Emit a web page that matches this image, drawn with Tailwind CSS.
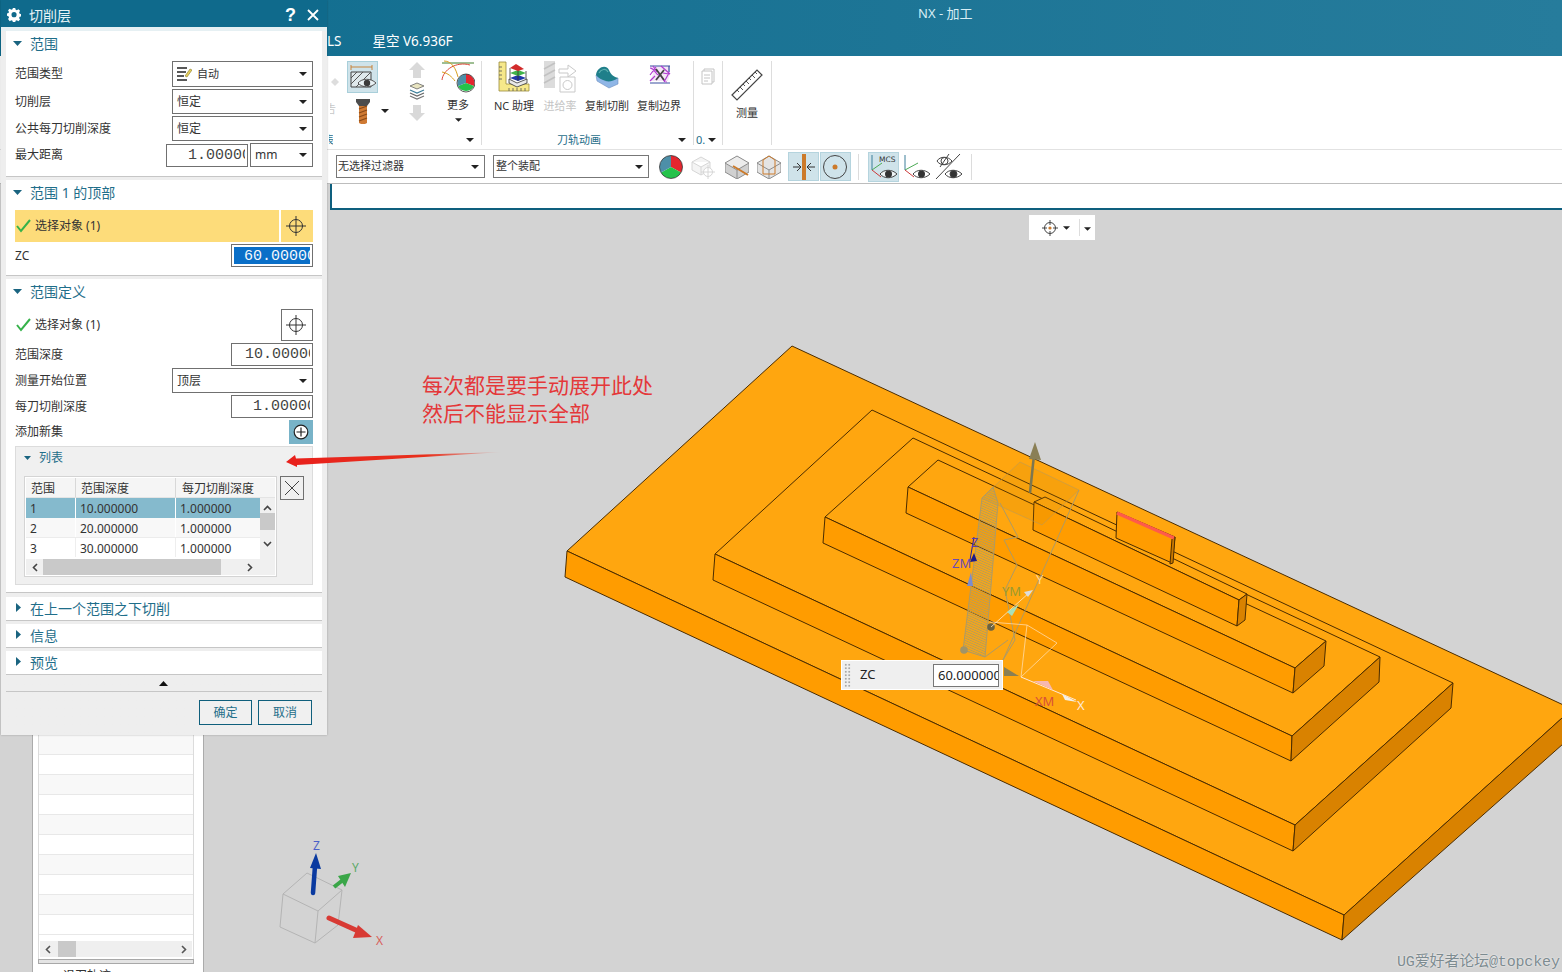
<!DOCTYPE html>
<html lang="zh">
<head>
<meta charset="utf-8">
<title>NX - 加工</title>
<script src="https://cdn.jsdelivr.net/npm/@tailwindcss/browser@4"></script>
</head>
<body class="m-0 overflow-hidden">
<div class="relative w-[1562px] h-[972px] overflow-hidden flex flex-col bg-[#d3d3d3] text-[#333] text-[11px] font-['Noto_Sans','Noto_Sans_CJK_SC',sans-serif]">

  <!-- window title + tabs -->
  <header class="h-[56px] shrink-0 bg-gradient-to-r from-[#0e6c8e] to-[#267c9c] text-white flex flex-col">
    <div class="h-[26px] pl-[918px] pt-[4px] text-[13px] leading-[18px] text-[#d8eef5]">NX - 加工</div>
    <nav class="h-[30px] flex items-center text-[13.500px]">
      <span class="ml-[327px]">LS</span>
      <span class="ml-[31px]">星空 V6.936F</span>
    </nav>
  </header>

  <!-- ribbon -->
  <section class="h-[93px] shrink-0 bg-white flex pl-[330px] pt-[5px]">
    <div class="w-[152px] h-[84px] border-r border-[#dddddd] flex flex-col justify-between">
      <div class="flex items-start">
        <div class="w-[17px] flex flex-col text-[#c8c8c8] overflow-hidden">
          <svg class="mt-[16px] w-[10px] h-[10px]" viewBox="0 0 10 10"><path d="M5 1l4 4-4 4-4-4z" fill="#ddd"/></svg>
          <span class="mt-[15px] text-[11px] leading-[14px] -ml-[5px] w-[12px] overflow-hidden">告</span>
        </div>
        <div class="w-[31px] flex flex-col items-center">
          <div class="w-[31px] h-[32px] bg-[#cfe3ea] border border-[#a9cfda] flex items-center justify-center">
            <svg class="w-[29px] h-[28px]" viewBox="0 0 29 28" fill="none">
              <path d="M3 2v5M24 2v5M3 4h21" stroke="#c77b2a" stroke-width=".9"/>
              <path d="M3 9h20v15H3z" fill="#dfe9ec" stroke="#444" stroke-width="1"/>
              <path d="M3 15l6-6M3 21l12-12M8 24L23 9M15 24l8-8" stroke="#555" stroke-width="1"/>
              <path d="M10 20c4-5 13-5 18 0-5 5-14 5-18 0z" fill="#e9f2f5" stroke="#555" stroke-width="1"/>
              <circle cx="19" cy="20" r="3.200" fill="#3b3b3b"/>
            </svg>
          </div>
          <svg class="mt-[6px] w-[14px] h-[25px]" viewBox="0 0 14 25">
            <path d="M0 0h14v3l-3 4H3L0 3z" fill="#4c4c4c"/>
            <path d="M3 7h8v17l-2 1H5l-2-1z" fill="#cf7a33"/>
            <path d="M3 10l8-3M3 14l8-3M3 18l8-3M3 22l8-3" stroke="#8a4a18" stroke-width="1.300"/>
          </svg>
        </div>
        <svg class="ml-[3px] mt-[48px] w-[8px] h-[4px]" viewBox="0 0 8 4"><path d="M0 0h8L4 4z" fill="#222"/></svg>
        <div class="ml-[16px] w-[24px] flex flex-col items-center">
          <svg class="w-[18px] h-[18px]" viewBox="0 0 18 18"><path d="M9 1l8 8h-4v8H5V9H1z" fill="#d9d9d9"/></svg>
          <svg class="mt-[3px] w-[18px] h-[18px]" viewBox="0 0 18 18" fill="none"><path d="M9 1l7 3-7 3-7-3z" fill="#e8e4c0" stroke="#666" stroke-width=".8"/><path d="M2 8l7 3 7-3" stroke="#3c7f9a" stroke-width="1.200"/><path d="M2 11l7 3 7-3" stroke="#666" stroke-width="1.200"/><path d="M2 14l7 3 7-3" stroke="#777" stroke-width="1.200"/></svg>
          <svg class="mt-[4px] w-[18px] h-[18px]" viewBox="0 0 18 18"><path d="M5 1h8v8h4l-8 8-8-8h4z" fill="#d9d9d9"/></svg>
        </div>
        <div class="ml-[10px] w-[38px] flex flex-col items-center">
          <svg class="-mt-[1px] w-[34px] h-[34px]" viewBox="0 0 34 34" fill="none">
            <path d="M1 3h32" stroke="#3f7f28" stroke-width="1"/>
            <path d="M1 20c1-10 14-19 28-15" stroke="#dd4a3a" stroke-width="1"/>
            <path d="M3 1c8 0 12 8 14 16" stroke="#d9a020" stroke-width="1"/>
            <path d="M1 12c6 1 10 5 13 9" stroke="#d9a020" stroke-width="1"/>
            <path d="M25 14v9l8 3a9 9 0 0 0-8-12z" fill="#e4262f"/>
            <path d="M25 23l8 3a9 9 0 0 1-16 0z" fill="#24c24a"/>
            <path d="M25 23l-8 3a9 9 0 0 1 8-12z" fill="#4d8fa8"/>
            <circle cx="25" cy="23" r="9" stroke="#333" stroke-width=".8"/>
          </svg>
          <span class="mt-[4px] leading-[14px]">更多</span>
          <svg class="mt-[6px] w-[7px] h-[4px]" viewBox="0 0 8 4"><path d="M0 0h8L4 4z" fill="#222"/></svg>
        </div>
      </div>
      <div class="h-[10px] flex items-center justify-between pr-[7px] text-[#1f6e8a]">
        <span class="w-[4px] overflow-hidden -ml-[1px]"><span class="-ml-[6px] block w-[12px]">表</span></span>
        <svg class="w-[8px] h-[4px]" viewBox="0 0 8 4"><path d="M0 0h8L4 4z" fill="#222"/></svg>
      </div>
    </div>

    <div class="w-[212px] h-[84px] border-r border-[#dddddd] flex flex-col justify-between">
      <div class="flex items-start pl-[10px]">
        <div class="w-[44px] flex flex-col items-center">
          <svg class="w-[32px] h-[32px]" viewBox="0 0 32 32" fill="none">
            <path d="M1 1h7v22h23v7H1z" fill="#f6e88a" stroke="#9a8a3a" stroke-width=".8"/>
            <path d="M1 6h3M1 10h3M1 14h3M1 18h3M11 30v-3M15 30v-3M19 30v-3M23 30v-3M27 30v-3" stroke="#555" stroke-width=".8"/>
            <path d="M11 18l8 4 10-4v4l-10 4-8-4z" fill="#e8e8e8" stroke="#333" stroke-width=".8"/>
            <path d="M12 17l8 3 8-3-8-3z" fill="#2038a8"/>
            <path d="M12 12l8 3 8-3-8-3z" fill="#3fb34a"/>
            <path d="M12 7l8 3 6-2-8-5z" fill="#d22b2b"/>
            <path d="M12 7v11M20 10v10M28 10v8" stroke="#333" stroke-width=".8"/>
          </svg>
          <span class="mt-[5px] leading-[16px] text-[11px] whitespace-nowrap">NC 助理</span>
        </div>
        <div class="ml-[2px] w-[44px] flex flex-col items-center">
          <svg class="w-[34px] h-[32px]" viewBox="0 0 34 32" fill="none">
            <path d="M1 0h11v27H1z" fill="#dcdcdc"/>
            <path d="M1 8l11-6M1 15l11-6M1 22l11-6" stroke="#c2c2c2" stroke-width="1.600"/>
            <path d="M16 8h9V4l8 6-8 6v-4h-9z" fill="#fff" stroke="#c9c9c9"/>
            <path d="M17 16h15v15H17z" fill="#fff" stroke="#c9c9c9"/>
            <circle cx="24.500" cy="24" r="4.500" stroke="#c9c9c9"/>
          </svg>
          <span class="mt-[5px] leading-[16px] text-[#c4c4c4] whitespace-nowrap">进给率</span>
        </div>
        <div class="ml-[3px] w-[44px] flex flex-col items-center">
          <svg class="w-[26px] h-[32px]" viewBox="0 0 26 32" fill="none">
            <path d="M2 14l1 6 12 7 9-4v-6L12 20z" fill="#8fb6e6" stroke="#6f8fc0" stroke-width=".6"/>
            <path d="M2 14C3 6 12 3 15 9c2 5 5 7 9 8-4 3-9 4-12 3-4-1-8-3-10-6z" fill="#1f7f8a"/>
            <path d="M5 12c2-4 7-5 9-1" stroke="#5db0b0" stroke-width="1.200"/>
          </svg>
          <span class="mt-[5px] leading-[16px] whitespace-nowrap">复制切削</span>
        </div>
        <div class="ml-[8px] w-[44px] flex flex-col items-center">
          <svg class="w-[24px] h-[32px]" viewBox="0 0 24 32" fill="none">
            <path d="M3 5h20v8l-2 7H3l3-7z" fill="#f3e6f6"/>
            <path d="M3 5h20M22 5v6M3 22h20" stroke="#3a4ea0" stroke-width="1.200"/>
            <path d="M3 7c5 0 5 7 9 7s3 7 8 7M3 14l6-8M14 5l9 8M17 21l5-9M3 20l5-5M6 5l4 6M16 12l6 1" stroke="#b03ad0" stroke-width="1.200"/>
            <path d="M9 8l8 11M17 9L9 19" stroke="#444" stroke-width="1.800"/>
          </svg>
          <span class="mt-[5px] leading-[16px] whitespace-nowrap">复制边界</span>
        </div>
      </div>
      <div class="h-[10px] flex items-center text-[#1f6e8a]">
        <span class="ml-[75px] w-[46px] whitespace-nowrap">刀轨动画</span>
        <svg class="ml-[75px] w-[8px] h-[4px]" viewBox="0 0 8 4"><path d="M0 0h8L4 4z" fill="#222"/></svg>
      </div>
    </div>

    <div class="w-[29px] h-[84px] border-r border-[#dddddd] flex flex-col justify-between">
      <div class="flex justify-center pt-[7px]">
        <svg class="w-[14px] h-[17px]" viewBox="0 0 14 17" fill="none" stroke="#c4c4c4"><path d="M3 3V1h10v13h-2"/><path d="M1 3h10v13H1z" fill="#fff"/><path d="M3 7h6M3 10h6M3 13h4"/></svg>
      </div>
      <div class="h-[10px] flex items-center justify-between pl-[2px] pr-[6px] text-[#1f6e8a]">
        <span>0.</span>
        <svg class="w-[8px] h-[4px]" viewBox="0 0 8 4"><path d="M0 0h8L4 4z" fill="#222"/></svg>
      </div>
    </div>

    <div class="w-[49px] h-[84px] border-r border-[#dddddd] flex flex-col items-center">
      <svg class="mt-[8px] w-[32px] h-[33px]" viewBox="0 0 32 33" fill="none">
        <path d="M1 26L26 1l5 5L6 31z" fill="#fff" stroke="#444" stroke-width="1.200"/>
        <path d="M6 21l2 2M9 18l3 3M12 15l2 2M15 12l3 3M18 9l2 2M21 6l3 3M24 3l2 2" stroke="#444" stroke-width=".9"/>
      </svg>
      <span class="mt-[3px] leading-[16px]">测量</span>
    </div>
  </section>

  <!-- selection bar -->
  <section class="h-[35px] shrink-0 bg-white border-y border-[#bdbdbd] border-t-[#e2e2e2] flex items-center pl-[336px]">
    <div class="w-[149px] h-[23px] border border-[#777] flex items-center justify-between pl-[1px] pr-[5px]">
      <span class="text-[11px]">无选择过滤器</span>
      <svg class="w-[8px] h-[4px]" viewBox="0 0 8 4"><path d="M0 0h8L4 4z" fill="#222"/></svg>
    </div>
    <div class="ml-[8px] w-[156px] h-[23px] border border-[#777] flex items-center justify-between pl-[2px] pr-[5px]">
      <span class="text-[11px]">整个装配</span>
      <svg class="w-[8px] h-[4px]" viewBox="0 0 8 4"><path d="M0 0h8L4 4z" fill="#222"/></svg>
    </div>
    <svg class="ml-[10px] w-[24px] h-[24px]" viewBox="0 0 24 24"><path d="M12 12V.5a11.500 11.500 0 0 1 10 17z" fill="#e4262f"/><path d="M12 12l10 5.500a11.500 11.500 0 0 1-20 0z" fill="#24c24a"/><path d="M12 12L2 17.500A11.500 11.500 0 0 1 12 .5z" fill="#4d8fa8"/><circle cx="12" cy="12" r="11.500" fill="none" stroke="#333" stroke-width=".8"/></svg>
    <svg class="ml-[8px] w-[24px] h-[24px]" viewBox="0 0 24 24" fill="none" stroke="#d6d6d6"><path d="M1 7l9-5 9 5v8l-9 5-9-5zM1 7l9 5 9-5M10 12v8" fill="#f4f4f4"/><circle cx="17" cy="17" r="4.500" fill="#fff"/><path d="M17 10v14M10 17h14"/></svg>
    <svg class="ml-[10px] w-[24px] h-[24px]" viewBox="0 0 24 24" fill="none"><path d="M0 8l12-7 12 7v9l-12 7-12-7z" fill="#d0d0d0"/><path d="M0 8l12 7 12-7-12-7z" fill="#ececec"/><path d="M0 8l12-7 12 7v9l-12 7-12-7zM0 8l12 7 12-7M12 15v9" stroke="#8c8c8c"/><path d="M8 11l15 9" stroke="#cc7a2a" stroke-width="2"/></svg>
    <svg class="ml-[8px] w-[24px] h-[24px]" viewBox="0 0 24 24" fill="none"><path d="M0 8l12-7 12 7v9l-12 7-12-7z" fill="#e4e4e4"/><path d="M0 8l12-7 12 7v9l-12 7-12-7zM0 8l12 7 12-7M12 15v9" stroke="#8c8c8c"/><path d="M6 5v14l12 0V5M6 5l6-4 6 4" stroke="#cc7a2a" stroke-width="1"/></svg>
    <div class="ml-[7px] w-[31px] h-[29px] bg-[#cfe3ea] border border-[#b5d4de] flex items-center justify-center">
      <svg class="w-[26px] h-[26px]" viewBox="0 0 26 26" fill="none"><path d="M11 0h4v26h-4z" fill="#cc7a2a"/><path d="M2 13h8M6 9l4 4-4 4M24 13h-8M20 9l-4 4 4 4" stroke="#333" stroke-width="1"/></svg>
    </div>
    <div class="ml-[1px] w-[31px] h-[29px] bg-[#cfe3ea] border border-[#b5d4de] flex items-center justify-center">
      <svg class="w-[26px] h-[26px] -translate-x-[1px]" viewBox="0 0 26 26" fill="none"><circle cx="13" cy="13" r="11.500" stroke="#444" stroke-width="1"/><circle cx="13" cy="13" r="2.500" fill="#cc7a2a"/></svg>
    </div>
    <div class="ml-[7px] w-[1px] h-[26px] bg-[#dcdcdc]"></div>
    <div class="ml-[9px] w-[31px] h-[30px] bg-[#cfe3ea] border border-[#b5d4de] flex items-center justify-center">
      <svg class="w-[29px] h-[28px]" viewBox="0 0 29 28" fill="none"><path d="M3 2v15" stroke="#3c7f9a"/><path d="M3 17l10-7" stroke="#4caa55"/><path d="M3 17l9 7" stroke="#cc3a3a"/><text x="10" y="9" font-size="7.500" fill="#333" font-family="DejaVu Sans">MCS</text><path d="M11 21c4-5 12-5 17 0-5 5-13 5-17 0z" fill="#eef4f6" stroke="#444"/><circle cx="19.500" cy="21" r="3.500" fill="#333"/></svg>
    </div>
    <svg class="ml-[2px] w-[30px] h-[28px]" viewBox="0 0 30 28" fill="none"><path d="M4 2v15" stroke="#3c7f9a"/><path d="M4 17l13-7" stroke="#4caa55"/><path d="M4 17l9 7" stroke="#cc3a3a"/><path d="M12 21c4-5 12-5 17 0-5 5-13 5-17 0z" fill="#fff" stroke="#444"/><circle cx="20.500" cy="21" r="3.500" fill="#333"/></svg>
    <svg class="ml-[3px] w-[30px] h-[28px]" viewBox="0 0 30 28" fill="none" stroke="#444"><path d="M3 8c3-5 11-5 15 0-4 5-12 5-15 0z"/><circle cx="10.500" cy="8" r="3.500"/><path d="M6 14L15 1M2 26L26 1"/><path d="M11 21c4-5 12-5 17 0-5 5-13 5-17 0z" fill="#fff"/><circle cx="19.500" cy="21" r="3.500" fill="#333"/></svg>
    <div class="ml-[7px] w-[1px] h-[26px] bg-[#dcdcdc]"></div>
  </section>

  <!-- cue line -->
  <div class="h-[26px] shrink-0 ml-[330px] bg-white border-l-[2px] border-b-[2px] border-[#0e5f7e]"></div>

  <!-- graphics window: the left navigator column runs behind the dialog -->
  <main class="flex-1 min-h-0 flex pl-[32px] overflow-hidden">
    <div class="w-[172px] h-full bg-white border-x border-[#ababab] flex flex-col pl-[5px] pr-[9px]">
      <div class="flex-1"></div>
      <div class="border-x border-[#dcdcdc] flex flex-col">
        <div class="h-[20px] bg-[#f8f8f8] border-b border-[#e8e8e8]"></div>
        <div class="h-[20px] bg-white border-b border-[#e8e8e8]"></div>
        <div class="h-[20px] bg-[#f8f8f8] border-b border-[#e8e8e8]"></div>
        <div class="h-[20px] bg-white border-b border-[#e8e8e8]"></div>
        <div class="h-[20px] bg-[#f8f8f8] border-b border-[#e8e8e8]"></div>
        <div class="h-[20px] bg-white border-b border-[#e8e8e8]"></div>
        <div class="h-[20px] bg-[#f8f8f8] border-b border-[#e8e8e8]"></div>
        <div class="h-[20px] bg-white border-b border-[#e8e8e8]"></div>
        <div class="h-[20px] bg-[#f8f8f8] border-b border-[#e8e8e8]"></div>
        <div class="h-[20px] bg-white border-b border-[#e8e8e8]"></div>
        <div class="h-[6px] bg-white"></div>
        <div class="h-[16px] mx-[1px] bg-[#efefef] flex items-center justify-between pl-[5px] pr-[5px]">
          <div class="flex items-center h-full">
            <svg class="w-[6px] h-[9px]" viewBox="0 0 6 9" fill="none"><path d="M5 1L1.500 4.500 5 8" stroke="#555" stroke-width="1.600"/></svg>
            <div class="ml-[7px] w-[18px] h-full bg-[#c9c9c9]"></div>
          </div>
          <svg class="w-[6px] h-[9px]" viewBox="0 0 6 9" fill="none"><path d="M1 1l3.500 3.500L1 8" stroke="#555" stroke-width="1.600"/></svg>
        </div>
        <div class="h-[2px] bg-white"></div>
      </div>
      <div class="h-[5px] bg-[#e4e4e4] border border-[#a8a8a8]"></div>
      <div class="h-[8px] overflow-hidden pl-[25px] pt-[4px] text-[12px] leading-[16px]">退刀轨迹</div>
    </div>
  </main>

  <!-- 3D model, view triad: free canvas -->
  <svg class="absolute left-0 top-0 w-[1562px] h-[972px] pointer-events-none" viewBox="0 0 1562 972" fill="none">
    <defs>
      <pattern id="hatch" width="2.200" height="2.200" patternUnits="userSpaceOnUse" patternTransform="rotate(24)"><path d="M0 1.100h2.200" stroke="#b39c5c" stroke-width="1"/></pattern>
    </defs>
    <g stroke="#4a2c00" stroke-width="1" stroke-linejoin="round">
      <path d="M792 346L1572 709 1344 915 567 551z" fill="#ffa60f"/>
      <path d="M567 551L1344 915 1342 940 565 577z" fill="#ff9c00"/>
      <path d="M1344 915L1572 709V736L1342 940z" fill="#d98200"/>

      <path d="M872 410L1453 683 1295 825 715 554z" fill="#ffa60f"/>
      <path d="M715 554L1295 825 1293 851 713 580z" fill="#ff9c00"/>
      <path d="M1295 825L1453 683 1451 708 1293 851z" fill="#d98200"/>

      <path d="M913 438L1380 657 1292 736 825 517z" fill="#ffa60f"/>
      <path d="M825 517L1292 736 1291 761 823 543z" fill="#ff9c00"/>
      <path d="M1292 736L1380 657 1379 682 1291 761z" fill="#d98200"/>

      <path d="M938 460L1326 641 1295 668 908 487z" fill="#ffa60f"/>
      <path d="M908 487L1295 668 1293 693 906 513z" fill="#ff9c00"/>
      <path d="M1295 668L1326 641 1324 666 1293 693z" fill="#d98200"/>

      <path d="M1045 497L1247 594 1239 600 1034 502z" fill="#ffa60f"/>
      <path d="M1034 502L1239 600 1237 626 1033 530z" fill="#ff9c00"/>
      <path d="M1239 600L1247 594 1245 620 1237 626z" fill="#d98200"/>

      <path d="M1117 512L1175 537 1172 563 1116 538z" fill="#ff9c00"/>
      <path d="M1172 539L1175 537 1173 563 1170 564z" fill="#c87800"/>
    </g>
    <path d="M1117 513L1174 538" stroke="#ff5a4a" stroke-width="3.500"/>

    <!-- section tool gizmo -->
    <path d="M1020 462L1079 490 1042 525 982 498z" fill="#c8860a" fill-opacity=".14" stroke="#b89a5c" stroke-width=".8" stroke-opacity=".7"/>
    <path d="M1079 490L1003 660M1000 503L1018 537 1004 540 1017 565 1005 590 1015 640 1003 660M985 657L1008 640" stroke="#ad9a66" stroke-width="1"/>
    <path d="M993 487L982 498 963 650 985 657 998 503z" fill="url(#hatch)" stroke="#ad9a66" stroke-width="1"/>
    <path d="M1030 493L1034 455" stroke="#7c7650" stroke-width="2.500"/>
    <path d="M1035 442L1041 460 1029 459z" fill="#8a7f55"/>
    <circle cx="964" cy="650" r="3.800" fill="#a09468"/>
    <circle cx="991" cy="627" r="3.800" fill="#6a6242"/>
    <path d="M991 627L1030 592" stroke="#ffe8c8" stroke-width="1" stroke-opacity=".8"/>
    <path d="M1033 590L1024 592 1028 597z" fill="#ddd"/>
    <path d="M1019 604L1007 612 1012 616z" fill="#a8e0b8"/>
    <path d="M1021 677L1057 643 1027 625 1021 677M990 622L1027 625" stroke="#ffe3bd" stroke-width="1" stroke-opacity=".7"/>
    <path d="M1021 677L1076 700" stroke="#ffe8d8" stroke-width="1"/>
    <path d="M1033 681L1053 690 1048 681z" fill="#f7b8b0"/>
    <path d="M1077 702L1062 694 1065 700z" fill="#f4f0e8"/>
    <path d="M1004 667L1019 676 1004 676z" fill="#8a7f55"/>
    <path d="M974 537L970 560" stroke="#24209a" stroke-width="1"/>
    <path d="M974 553L970 562 977 561z" fill="#1a1a8c"/>
    <path d="M971 572L967 586 973 586z" fill="#7a8cd0"/>
    <g font-family="Noto Sans, sans-serif" font-size="13">
      <text x="971" y="547" fill="#5a3db0">Z</text>
      <text x="952" y="568" fill="#6a4bb8">ZM</text>
      <text x="1002" y="596" fill="#9a9a30">YM</text>
      <text x="1035" y="706" fill="#d8503a">XM</text>
      <text x="1077" y="710" fill="#ffe8d8">X</text>
      <text x="1036" y="584" fill="#ffd89a">Y</text>
    </g>

    <!-- view triad -->
    <path d="M307 873L283 894 318 911 342 890zM283 894L280 927 315 943 318 911M315 943L338 925 342 890" stroke="#b4b4b4" stroke-width="1"/>
    <path d="M313 893L315 866" stroke="#0a3aa0" stroke-width="4.500" stroke-linecap="round"/>
    <path d="M316 853L321 869 310 868z" fill="#0a3aa0"/>
    <path d="M334 887L343 880" stroke="#3aa648" stroke-width="4"/>
    <path d="M351 873L345 887 338 876z" fill="#3aa648"/>
    <path d="M329 918L358 931" stroke="#d83a34" stroke-width="5" stroke-linecap="round"/>
    <path d="M372 937L353 938 358 925z" fill="#d83a34"/>
    <g font-family="Noto Sans, sans-serif" font-size="12">
      <text x="313" y="850" fill="#4a5fc8">Z</text>
      <text x="352" y="872" fill="#5aa868">Y</text>
      <text x="376" y="945" fill="#d8605a">X</text>
    </g>
  </svg>

  <!-- annotation -->
  <p class="absolute left-[422px] top-[370px] text-[21px] leading-[28px] text-[#e4383a] font-['Noto_Sans_CJK_SC',sans-serif] whitespace-nowrap">每次都是要手动展开此处<br>然后不能显示全部</p>

  <!-- watermark -->
  <div class="absolute left-[1397px] top-[950px] text-[15px] leading-[20px] tracking-[-0.15px] text-[#7d8b90] [text-shadow:0_0_2px_#fff] font-['Liberation_Mono','Noto_Sans_CJK_SC',monospace] whitespace-nowrap translate-y-[3px]">UG爱好者论坛@topckey</div>

  <!-- orient view widget -->
  <div class="absolute left-[1029px] top-[215px] w-[66px] h-[25px] bg-white flex items-center">
    <svg class="ml-[13px] w-[16px] h-[16px]" viewBox="0 0 16 16" fill="none" stroke="#444"><circle cx="8" cy="8" r="5.500"/><path d="M8 0v5M8 11v5M0 8h5M11 8h5"/><circle cx="8" cy="8" r="1.600" fill="#cc7a2a" stroke="none"/></svg>
    <svg class="ml-[5px] w-[7px] h-[4px]" viewBox="0 0 8 4"><path d="M0 0h8L4 4z" fill="#222"/></svg>
    <div class="ml-[9px] w-[1px] h-[17px] bg-[#dddddd]"></div>
    <svg class="ml-[4px] mt-[3px] w-[7px] h-[4px]" viewBox="0 0 8 4"><path d="M0 0h8L4 4z" fill="#222"/></svg>
  </div>

  <!-- on-screen input -->
  <div class="absolute left-[841px] top-[660px] w-[162px] h-[30px] bg-[#efefef] border border-white flex items-center">
    <div class="ml-[2px] w-[7px] h-[24px] bg-[radial-gradient(circle,#a8a8a8_1.100px,transparent_1.200px)] bg-[length:3.500px_3.500px]"></div>
    <span class="ml-[9px] w-[73px] text-[13px] text-[#222]">ZC</span>
    <div class="w-[66px] h-[23px] bg-white border border-[#777] pl-[4px] overflow-hidden text-[13px] leading-[21px] text-[#222] whitespace-nowrap">60.000000</div>
  </div>

  <!-- 切削层 dialog -->
  <aside class="absolute left-[1px] top-0 w-[326px] h-[735px] bg-[#eeeeee] shadow-[0_0_2px_rgba(0,0,0,.25)] flex flex-col text-[12px] text-[#333] font-['Noto_Sans','Noto_Sans_CJK_SC',sans-serif]">
    <div class="h-[27px] shrink-0 bg-[#0f6a8c] text-white flex items-center pt-[3px] pl-[6px] pr-[8px]">
      <svg class="w-[14px] h-[14px]" viewBox="0 0 14 14"><path fill-rule="evenodd" d="M5.800 0h2.400l.4 1.900 1.300.6 1.700-1 1.700 1.700-1 1.700.6 1.300 1.900.4v2.400l-1.900.4-.6 1.300 1 1.700-1.700 1.700-1.700-1-1.300.6-.4 1.900H5.800l-.4-1.900-1.300-.6-1.700 1L.7 11.800l1-1.700-.6-1.300L-.8 8.400V6l1.900-.4.6-1.300-1-1.700L2.400 1l1.700 1 1.300-.6zM7 4.500A2.700 2.700 0 1 0 7 9.900 2.700 2.700 0 0 0 7 4.500z" fill="#fff" transform="translate(.4 -.2) scale(.95)"/></svg>
      <span class="ml-[8px] text-[14px] text-[#e8f3f6]">切削层</span>
      <span class="ml-auto text-[18px] leading-[20px] font-bold font-['Liberation_Sans',sans-serif]">?</span>
      <svg class="ml-[11px] w-[12px] h-[12px]" viewBox="0 0 12 12" fill="none"><path d="M1 1l10 10M11 1L1 11" stroke="#fff" stroke-width="1.800"/></svg>
    </div>
    <div class="flex-1 flex flex-col px-[5px] pt-[4px] min-h-0 bg-gradient-to-b from-[#e6f0f3] from-[0.500%] to-[#eeeeee] to-[0.600%]">

      <section class="bg-white border-b border-[#c6c6c6] px-[9px] pb-[9px] h-[146px]">
        <div class="h-[26px] pb-[2px] flex items-center -ml-[2px] text-[14px] text-[#1f6e8a]">
          <svg class="w-[9px] h-[5px]" viewBox="0 0 9 5"><path d="M0 0h9L4.500 5z" fill="#1a6480"/></svg>
          <span class="ml-[8px]">范围</span>
        </div>
        <div class="mt-[4px] h-[26px] flex items-center justify-between">
          <span>范围类型</span>
          <div class="w-[141px] h-[26px] bg-white border border-[#707070] flex items-center pl-[4px] pr-[5px]">
            <svg class="w-[15px] h-[15px]" viewBox="0 0 15 15" fill="none"><path d="M0 1h10M0 5h9M0 9h7M0 13h10" stroke="#222" stroke-width="1.500"/><path d="M8 9l5-7 2 1-5 7z" fill="#e6cf5a" stroke="#8a7a2a" stroke-width=".6"/></svg>
            <span class="ml-[5px] text-[11px]">自动</span>
            <svg class="ml-auto w-[8px] h-[4px]" viewBox="0 0 8 4"><path d="M0 0h8L4 4z" fill="#222"/></svg>
          </div>
        </div>
        <div class="mt-[2px] h-[25px] flex items-center justify-between">
          <span>切削层</span>
          <div class="w-[141px] h-[25px] bg-white border border-[#707070] flex items-center pl-[4px] pr-[5px]">
            <span>恒定</span>
            <svg class="ml-auto w-[8px] h-[4px]" viewBox="0 0 8 4"><path d="M0 0h8L4 4z" fill="#222"/></svg>
          </div>
        </div>
        <div class="mt-[2px] h-[25px] flex items-center justify-between">
          <span>公共每刀切削深度</span>
          <div class="w-[141px] h-[25px] bg-white border border-[#707070] flex items-center pl-[4px] pr-[5px]">
            <span>恒定</span>
            <svg class="ml-auto w-[8px] h-[4px]" viewBox="0 0 8 4"><path d="M0 0h8L4 4z" fill="#222"/></svg>
          </div>
        </div>
        <div class="mt-[2px] h-[24px] flex items-center">
          <span>最大距离</span>
          <div class="ml-auto w-[82px] h-[23px] bg-white border border-[#707070] pl-[21px] pr-[2px]">
            <div class="overflow-hidden font-['Liberation_Mono',monospace] text-[15px] leading-[22px] text-[#444] whitespace-nowrap">1.000000</div>
          </div>
          <div class="ml-[2px] w-[63px] h-[24px] bg-white border border-[#707070] flex items-center pl-[4px] pr-[5px]">
            <span>mm</span>
            <svg class="ml-auto w-[8px] h-[4px]" viewBox="0 0 8 4"><path d="M0 0h8L4 4z" fill="#222"/></svg>
          </div>
        </div>
      </section>

      <section class="mt-[3px] bg-white border-b border-[#c6c6c6] px-[9px] h-[96px]">
        <div class="h-[26px] pb-[2px] flex items-center -ml-[2px] text-[14px] text-[#1f6e8a]">
          <svg class="w-[9px] h-[5px]" viewBox="0 0 9 5"><path d="M0 0h9L4.500 5z" fill="#1a6480"/></svg>
          <span class="ml-[8px]">范围 1 的顶部</span>
        </div>
        <div class="mt-[4px] h-[32px] flex">
          <div class="flex-1 bg-[#fddc7a] flex items-center pl-[1px]">
            <svg class="w-[15px] h-[14px]" viewBox="0 0 15 14" fill="none"><path d="M1 7l4 5 9-11" stroke="#36b24a" stroke-width="2"/></svg>
            <span class="ml-[4px] text-[12px]">选择对象 (1)</span>
          </div>
          <div class="ml-[2px] w-[32px] bg-[#fddc7a] flex items-center justify-center">
            <svg class="w-[20px] h-[20px] -translate-x-[1px]" viewBox="0 0 20 20" fill="none" stroke="#333"><circle cx="10" cy="10" r="6.500"/><path d="M10 0v20M0 10h20"/></svg>
          </div>
        </div>
        <div class="mt-[2px] h-[23px] flex items-center justify-between">
          <span>ZC</span>
          <div class="w-[82px] h-[23px] bg-white border border-[#707070] p-[2px]">
            <div class="h-full bg-[#0a6fc8] text-[#f4f8fc] pl-[10px] overflow-hidden font-['Liberation_Mono',monospace] text-[15px] leading-[19px] whitespace-nowrap">60.000000</div>
          </div>
        </div>
      </section>

      <section class="mt-[3px] bg-white border-b border-[#c6c6c6] px-[9px] h-[314px]">
        <div class="h-[26px] pb-[2px] flex items-center -ml-[2px] text-[14px] text-[#1f6e8a]">
          <svg class="w-[9px] h-[5px]" viewBox="0 0 9 5"><path d="M0 0h9L4.500 5z" fill="#1a6480"/></svg>
          <span class="ml-[8px]">范围定义</span>
        </div>
        <div class="mt-[4px] h-[32px] flex items-center">
          <svg class="ml-[1px] w-[15px] h-[14px]" viewBox="0 0 15 14" fill="none"><path d="M1 7l4 5 9-11" stroke="#36b24a" stroke-width="2"/></svg>
          <span class="ml-[4px]">选择对象 (1)</span>
          <div class="ml-auto w-[32px] h-[32px] border border-[#707070] flex items-center justify-center">
            <svg class="w-[20px] h-[20px] -translate-x-[1px]" viewBox="0 0 20 20" fill="none" stroke="#333"><circle cx="10" cy="10" r="6.500"/><path d="M10 0v20M0 10h20"/></svg>
          </div>
        </div>
        <div class="mt-[2px] h-[23px] flex items-center justify-between">
          <span>范围深度</span>
          <div class="w-[82px] h-[23px] border border-[#707070] pl-[13px] pr-[2px]">
            <div class="overflow-hidden font-['Liberation_Mono',monospace] text-[15px] leading-[22px] text-[#444] whitespace-nowrap">10.000000</div>
          </div>
        </div>
        <div class="mt-[2px] h-[25px] flex items-center justify-between">
          <span>测量开始位置</span>
          <div class="w-[141px] h-[25px] border border-[#707070] flex items-center pl-[4px] pr-[5px]">
            <span>顶层</span>
            <svg class="ml-auto w-[8px] h-[4px]" viewBox="0 0 8 4"><path d="M0 0h8L4 4z" fill="#222"/></svg>
          </div>
        </div>
        <div class="mt-[2px] h-[23px] flex items-center justify-between">
          <span>每刀切削深度</span>
          <div class="w-[82px] h-[23px] border border-[#707070] pl-[21px] pr-[2px]">
            <div class="overflow-hidden font-['Liberation_Mono',monospace] text-[15px] leading-[22px] text-[#444] whitespace-nowrap">1.000000</div>
          </div>
        </div>
        <div class="mt-[2px] h-[24px] flex items-center justify-between">
          <span>添加新集</span>
          <div class="w-[24px] h-[24px] bg-[#78b3c8] flex items-center justify-center">
            <svg class="w-[16px] h-[16px]" viewBox="0 0 16 16" fill="#fff" stroke="#222" stroke-width="1.200"><circle cx="8" cy="8" r="6.800"/><path d="M8 3.500v9M3.500 8h9"/></svg>
          </div>
        </div>
        <div class="mt-[2px] h-[139px] bg-[#f0f0f0] border border-[#dcdcdc] pl-[8px] pr-[8px]">
          <div class="h-[21px] flex items-center text-[#1f6e8a]">
            <svg class="w-[7px] h-[4px]" viewBox="0 0 9 5"><path d="M0 0h9L4.500 5z" fill="#1a6480"/></svg>
            <span class="ml-[8px]">列表</span>
          </div>
          <div class="mt-[8px] flex items-start">
            <div class="w-[253px] h-[101px] border border-[#d4d4d4] bg-white p-[1px] flex flex-col">
              <div class="h-[20px] flex bg-[#f5f5f5] border-b border-[#e4e4e4]">
                <span class="w-[50px] pl-[5px] leading-[21px] border-r border-[#d8d8d8]">范围</span>
                <span class="w-[100px] pl-[5px] leading-[21px] border-r border-[#d8d8d8]">范围深度</span>
                <span class="flex-1 pl-[6px] leading-[21px]">每刀切削深度</span>
              </div>
              <div class="flex flex-1 min-h-0">
                <div class="w-[234px] flex flex-col text-[12px]">
                  <div class="h-[20px] flex bg-[#85bacd] leading-[21px]">
                    <span class="w-[50px] pl-[4px] border-r border-white">1</span>
                    <span class="w-[100px] pl-[4px] border-r border-white">10.000000</span>
                    <span class="flex-1 pl-[4px]">1.000000</span>
                  </div>
                  <div class="h-[20px] flex bg-[#f8f8f8] border-b border-[#ececec] leading-[21px]">
                    <span class="w-[50px] pl-[4px] border-r border-white">2</span>
                    <span class="w-[100px] pl-[4px] border-r border-white">20.000000</span>
                    <span class="flex-1 pl-[4px]">1.000000</span>
                  </div>
                  <div class="h-[19px] flex leading-[21px]">
                    <span class="w-[50px] pl-[4px] border-r border-[#eee]">3</span>
                    <span class="w-[100px] pl-[4px] border-r border-[#eee]">30.000000</span>
                    <span class="flex-1 pl-[4px]">1.000000</span>
                  </div>
                </div>
                <div class="flex-1 bg-[#f0f0f0] flex flex-col items-center">
                  <svg class="mt-[7px] w-[9px] h-[6px]" viewBox="0 0 9 6" fill="none"><path d="M1 5l3.500-3.500L8 5" stroke="#444" stroke-width="1.600"/></svg>
                  <div class="mt-[2px] w-full h-[17px] bg-[#c9c9c9]"></div>
                  <svg class="mt-[11px] w-[9px] h-[6px]" viewBox="0 0 9 6" fill="none"><path d="M1 1l3.500 3.500L8 1" stroke="#444" stroke-width="1.600"/></svg>
                </div>
              </div>
              <div class="h-[16px] bg-[#f0f0f0] flex items-center">
                <svg class="ml-[6px] w-[6px] h-[9px]" viewBox="0 0 6 9" fill="none"><path d="M5 1L1.500 4.500 5 8" stroke="#444" stroke-width="1.600"/></svg>
                <div class="ml-[5px] w-[178px] h-full bg-[#c9c9c9]"></div>
                <svg class="ml-[26px] w-[6px] h-[9px]" viewBox="0 0 6 9" fill="none"><path d="M1 1l3.500 3.500L1 8" stroke="#444" stroke-width="1.600"/></svg>
              </div>
            </div>
            <div class="ml-[3px] w-[24px] h-[24px] border border-[#707070] flex items-center justify-center">
              <svg class="w-[16px] h-[16px]" viewBox="0 0 16 16" fill="none"><path d="M1 1l14 14M15 1L1 15" stroke="#444" stroke-width="1"/></svg>
            </div>
          </div>
        </div>
      </section>

      <section class="mt-[4px] h-[24px] bg-white border-b border-[#c6c6c6] flex items-center pl-[10px] text-[14px] text-[#1f6e8a]">
        <svg class="w-[5px] h-[9px] -translate-y-[1px]" viewBox="0 0 5 9"><path d="M0 0l5 4.500L0 9z" fill="#1a6480"/></svg>
        <span class="ml-[9px]">在上一个范围之下切削</span>
      </section>
      <section class="mt-[3px] h-[24px] bg-white border-b border-[#c6c6c6] flex items-center pl-[10px] text-[14px] text-[#1f6e8a]">
        <svg class="w-[5px] h-[9px] -translate-y-[1px]" viewBox="0 0 5 9"><path d="M0 0l5 4.500L0 9z" fill="#1a6480"/></svg>
        <span class="ml-[9px]">信息</span>
      </section>
      <section class="mt-[3px] h-[24px] bg-white border-b border-[#c6c6c6] flex items-center pl-[10px] text-[14px] text-[#1f6e8a]">
        <svg class="w-[5px] h-[9px] -translate-y-[1px]" viewBox="0 0 5 9"><path d="M0 0l5 4.500L0 9z" fill="#1a6480"/></svg>
        <span class="ml-[9px]">预览</span>
      </section>
      <div class="h-[17px] border-b border-[#c6c6c6] flex items-center justify-center">
        <svg class="w-[9px] h-[5px] -translate-x-[1px]" viewBox="0 0 9 5"><path d="M0 5h9L4.500 0z" fill="#111"/></svg>
      </div>
      <div class="mt-[8px] flex justify-end pr-[10px] gap-[6px] text-[#1f6e8a]">
        <button class="w-[53px] h-[25px] border border-[#0f5f7c] text-[12px] bg-[#f0f0f0]">确定</button>
        <button class="w-[54px] h-[25px] border border-[#0f5f7c] text-[12px] bg-[#f0f0f0]">取消</button>
      </div>
    </div>
  </aside>

  <!-- annotation arrow lies over the dialog -->
  <svg class="absolute left-[280px] top-[445px] w-[230px] h-[30px] pointer-events-none" viewBox="280 445 230 30">
    <defs>
      <linearGradient id="tail" x1="0" x2="1" y1="0" y2="0"><stop offset="0" stop-color="#e8201c"/><stop offset=".65" stop-color="#e8301c"/><stop offset="1" stop-color="#e8301c" stop-opacity="0"/></linearGradient>
    </defs>
    <path d="M286 462L295 455 296 458.500 503 452 297 465 297 467z" fill="url(#tail)"/>
  </svg>
</div>
</body>
</html>
